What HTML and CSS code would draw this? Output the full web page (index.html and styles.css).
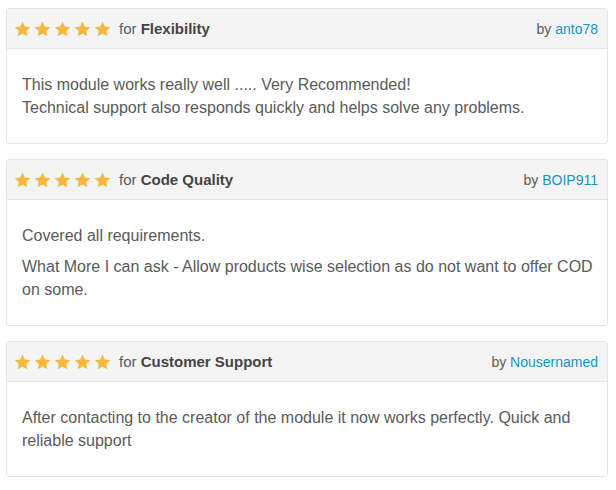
FILE: index.html
```html
<!DOCTYPE html>
<html><head><title>Reviews</title>
<link rel="stylesheet" href="styles.css">
</head>
<body>
<svg width="0" height="0" class="defs">
  <symbol id="star" viewBox="0 0 24 23">
    <path d="M12 0.8l3.3 7.2 7.9 0.9-5.9 5.4 1.6 7.8L12 18.1l-6.9 4 1.6-7.8L0.8 8.9l7.9-0.9z"/>
  </symbol>
</svg>
<div class="review">
  <div class="review-head">
    <span class="stars">
      <svg><use href="#star"/></svg><svg><use href="#star"/></svg><svg><use href="#star"/></svg><svg><use href="#star"/></svg><svg><use href="#star"/></svg>
    </span>
    <span class="topic">for <strong>Flexibility</strong></span>
    <span class="author">by <a href="#">anto78</a></span>
  </div>
  <div class="review-body">
    <p>This module works really well ..... Very Recommended!<br>Technical support also responds quickly and helps solve any problems.</p>
  </div>
</div>
<div class="review">
  <div class="review-head">
    <span class="stars">
      <svg><use href="#star"/></svg><svg><use href="#star"/></svg><svg><use href="#star"/></svg><svg><use href="#star"/></svg><svg><use href="#star"/></svg>
    </span>
    <span class="topic">for <strong>Code Quality</strong></span>
    <span class="author">by <a href="#">BOIP911</a></span>
  </div>
  <div class="review-body">
    <p>Covered all requirements.</p>
    <p>What More I can ask - Allow products wise selection as do not want to offer COD on some.</p>
  </div>
</div>
<div class="review">
  <div class="review-head">
    <span class="stars">
      <svg><use href="#star"/></svg><svg><use href="#star"/></svg><svg><use href="#star"/></svg><svg><use href="#star"/></svg><svg><use href="#star"/></svg>
    </span>
    <span class="topic">for <strong>Customer Support</strong></span>
    <span class="author">by <a href="#">Nousernamed</a></span>
  </div>
  <div class="review-body">
    <p>After contacting to the creator of the module it now works perfectly. Quick and reliable support</p>
  </div>
</div>
</body>
</html>
```
FILE: styles.css
```css
body {
    margin: 8px 8px 0 6px;
    font-family: "Liberation Sans", Arial, sans-serif;
    font-size: 16px;
    color: #5a5a5a;
    background: #fff;
}

.defs {
    position: absolute;
}

.review {
    border: 1px solid #e1e6eb;
    border-radius: 3px;
    margin-bottom: 15px;
}

.review-head {
    display: flex;
    align-items: center;
    height: 39px;
    padding: 0 9px 0 7px;
    background: #f4f4f4;
    border-bottom: 1px solid #e1e6eb;
    font-size: 15px;
}

.stars {
    display: flex;
    gap: 3px;
    margin-right: 8px;
    fill: #f5b83c;
}

.stars svg {
    width: 17px;
    height: 16px;
}

.topic strong {
    color: #444;
}

.author {
    margin-left: auto;
    font-size: 14px;
}

.author a {
    color: #1b93c0;
    text-decoration: none;
}

.review-body {
    padding: 16px 4px 16px 15px;
}

.review-body p {
    margin: 8px 0;
    line-height: 23px;
}
```
